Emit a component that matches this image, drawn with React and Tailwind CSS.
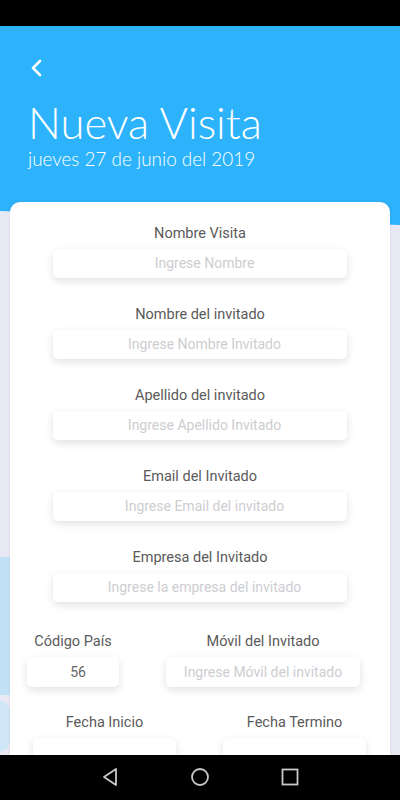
import React from 'react';

const fields = [
  { label: 'Nombre Visita', placeholder: 'Ingrese Nombre' },
  { label: 'Nombre del invitado', placeholder: 'Ingrese Nombre Invitado' },
  { label: 'Apellido del invitado', placeholder: 'Ingrese Apellido Invitado' },
  { label: 'Email del Invitado', placeholder: 'Ingrese Email del invitado' },
  { label: 'Empresa del Invitado', placeholder: 'Ingrese la empresa del invitado' },
];

const boxCls =
  'rounded-[5px] bg-white shadow-[0_3px_8px_rgba(0,0,0,0.12)] flex items-center justify-center text-[14px]';

const Label = ({ children }) => (
  <p className="text-[14.5px] leading-5 text-[#5a5a5a] whitespace-nowrap">{children}</p>
);

const Field = ({ label, placeholder }) => (
  <div className="flex flex-col items-center">
    <Label>{label}</Label>
    <div className={`${boxCls} mt-[5px] h-[29px] w-[294px] pl-[9px] text-[#cdcdd1]`}>{placeholder}</div>
  </div>
);

const App = () => {
  return (
    <div
      className="relative flex flex-col h-[800px] w-[400px] overflow-hidden bg-[#e8e9f4]"
      style={{ fontFamily: 'Roboto, "Noto Sans", sans-serif' }}
    >
      <div className="h-[26px] bg-black shrink-0" />

      {/* header */}
      <header className="h-[199px] shrink-0 bg-[#2db3fb] px-[28px] pt-[32px] text-white [clip-path:polygon(0_0,100%_0,100%_100%,0_93%)]">
        <svg width="16" height="20" viewBox="0 0 16 20" className="ml-[1px]">
          <path d="M11 3 L4 10 L11 17" fill="none" stroke="white" strokeWidth="2.6" strokeLinecap="round" strokeLinejoin="round" />
        </svg>
        <h1
          className="mt-[20px] text-[43.5px] leading-[48px] font-light"
          style={{ fontFamily: 'Lato, "Open Sans", sans-serif' }}
        >
          Nueva Visita
        </h1>
        <p
          className="text-[18.9px] leading-6 mt-[1px] font-light"
          style={{ fontFamily: 'Lato, "Open Sans", sans-serif' }}
        >
          jueves 27 de junio del 2019
        </p>
      </header>

      {/* side decoration */}
      <div className="absolute left-0 top-[557px] w-[10px] h-[138px] bg-[#c2e1f7]" />
      <div className="absolute -left-[14px] top-[700px] w-[24px] h-[52px] rounded-full bg-[#cfe6f8]" />

      {/* card */}
      <main className="relative z-10 -mt-[23px] mx-[10px] flex-1 overflow-hidden rounded-t-[10px] bg-white shadow-[0_0_4px_rgba(0,0,0,0.06)] pt-[22px]">
        <div className="flex flex-col gap-[27px]">
          {fields.map((f) => (
            <Field key={f.label} {...f} />
          ))}
        </div>

        <div className="mt-[30px] flex">
          <div className="ml-[17px] w-[92px] flex flex-col items-center">
            <Label>Código País</Label>
            <div className={`${boxCls} mt-[5px] h-[30px] w-[92px] pl-[10px] text-[#666]`}>56</div>
          </div>
          <div className="ml-[47px] w-[194px] flex flex-col items-center">
            <Label>Móvil del Invitado</Label>
            <div className={`${boxCls} mt-[5px] h-[30px] w-[194px] text-[#cdcdd1]`}>Ingrese Móvil del invitado</div>
          </div>
        </div>

        <div className="mt-[26px] flex">
          <div className="ml-[23px] w-[143px] flex flex-col items-center">
            <Label>Fecha Inicio</Label>
            <div className={`${boxCls} mt-[5px] h-[30px] w-[143px]`} />
          </div>
          <div className="ml-[47px] w-[143px] flex flex-col items-center">
            <Label>Fecha Termino</Label>
            <div className={`${boxCls} mt-[5px] h-[30px] w-[143px]`} />
          </div>
        </div>
      </main>

      {/* android nav bar */}
      <nav className="relative z-20 h-[45px] shrink-0 bg-black flex items-center justify-center gap-[71px] pb-[1px]">
        <svg width="18" height="20" viewBox="0 0 18 20">
          <path d="M15 2 L3 10 L15 18 Z" fill="none" stroke="#c8c8c8" strokeWidth="1.8" strokeLinejoin="round" />
        </svg>
        <svg width="20" height="20" viewBox="0 0 20 20">
          <circle cx="10" cy="10" r="8" fill="none" stroke="#c8c8c8" strokeWidth="1.8" />
        </svg>
        <svg width="18" height="18" viewBox="0 0 18 18">
          <rect x="1.5" y="1.5" width="15" height="15" fill="none" stroke="#c8c8c8" strokeWidth="1.8" />
        </svg>
      </nav>
    </div>
  );
};

export default App;
